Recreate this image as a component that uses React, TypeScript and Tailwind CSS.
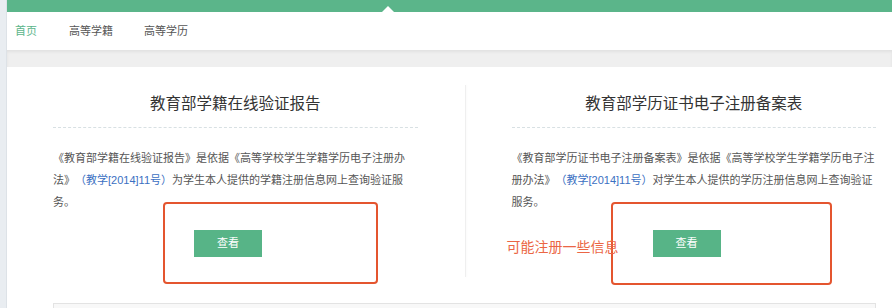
import React from "react";

const font = { fontFamily: '"Liberation Sans", "Noto Sans CJK SC", sans-serif' };

const cards = [
  {
    title: "教育部学籍在线验证报告",
    before: "《教育部学籍在线验证报告》是依据《高等学校学生学籍学历电子注册办法》",
    after: "为学生本人提供的学籍注册信息网上查询验证服务。",
  },
  {
    title: "教育部学历证书电子注册备案表",
    before: "《教育部学历证书电子注册备案表》是依据《高等学校学生学籍学历电子注册办法》",
    after: "对学生本人提供的学历注册信息网上查询验证服务。",
  },
];

const Card: React.FC<{ title: string; before: string; after: string; children?: React.ReactNode }> = ({
  title,
  before,
  after,
  children,
}) => (
  <div className="relative w-[365px] pt-[7px] pb-[20px]">
    <h3 className="text-center text-[15.5px] leading-[24px] text-[#333] pb-[11px] border-b border-dashed border-[#d8e0e3]">
      {title}
    </h3>
    <p className="mt-[19px] text-[11px] leading-[22px] text-[#555] [text-spacing-trim:space-all]">
      {before}
      <span className="text-[#3b70c2]">（教学[2014]11号）</span>
      {after}
    </p>
    <button className="mt-[17px] ml-[141px] w-[68px] h-[27px] bg-[#57b487] text-white text-[11px] block">
      查看
    </button>
    {children}
  </div>
);

export default function App() {
  return (
    <div className="flex w-[894px] h-[308px] overflow-hidden bg-white" style={font}>
      <div className="w-[7px] shrink-0 bg-[#e9edf1] border-r border-[#dde2e7]" />
      <div className="w-[885px] shrink-0">
        <div className="relative h-[12px] bg-[#5bb58a]">
          <div className="absolute left-[375px] bottom-0 w-0 h-0 border-x-[6px] border-x-transparent border-b-[6px] border-b-white" />
        </div>
        <nav className="flex items-center h-[38px] pl-[8px] gap-[32px] text-[11px]">
          <a className="text-[#5bb58a]">首页</a>
          <a className="text-[#555]">高等学籍</a>
          <a className="text-[#555] ml-[-1px]">高等学历</a>
        </nav>
        <div className="h-[17px] bg-[#efefef] shadow-[inset_0_2px_3px_rgba(0,0,0,0.06)]" />
        <div className="pl-[46px] pr-[16px] pt-[18px]">
          <div className="flex">
            <Card {...cards[0]}>
              <div className="absolute left-[110px] top-[117px] w-[215px] h-[82px] border-2 border-[#e4552f] rounded-[4px]" />
            </Card>
            <div className="w-px ml-[47px] mr-[46px] bg-[#efefef] shadow-[1px_0_2px_rgba(0,0,0,0.03)]" />
            <Card {...cards[1]}>
              <div className="absolute left-[99px] top-[117px] w-[221px] h-[83px] border-2 border-[#e4552f] rounded-[4px]" />
              <div className="absolute left-[-5px] top-[152px] text-[14px] leading-[20px] text-[#eb6645] whitespace-nowrap">
                可能注册一些信息
              </div>
            </Card>
          </div>
          <div className="mt-[26px] h-[40px] border border-[#e3e3e3] bg-[#f8f8f8]" />
        </div>
      </div>
    </div>
  );
}
